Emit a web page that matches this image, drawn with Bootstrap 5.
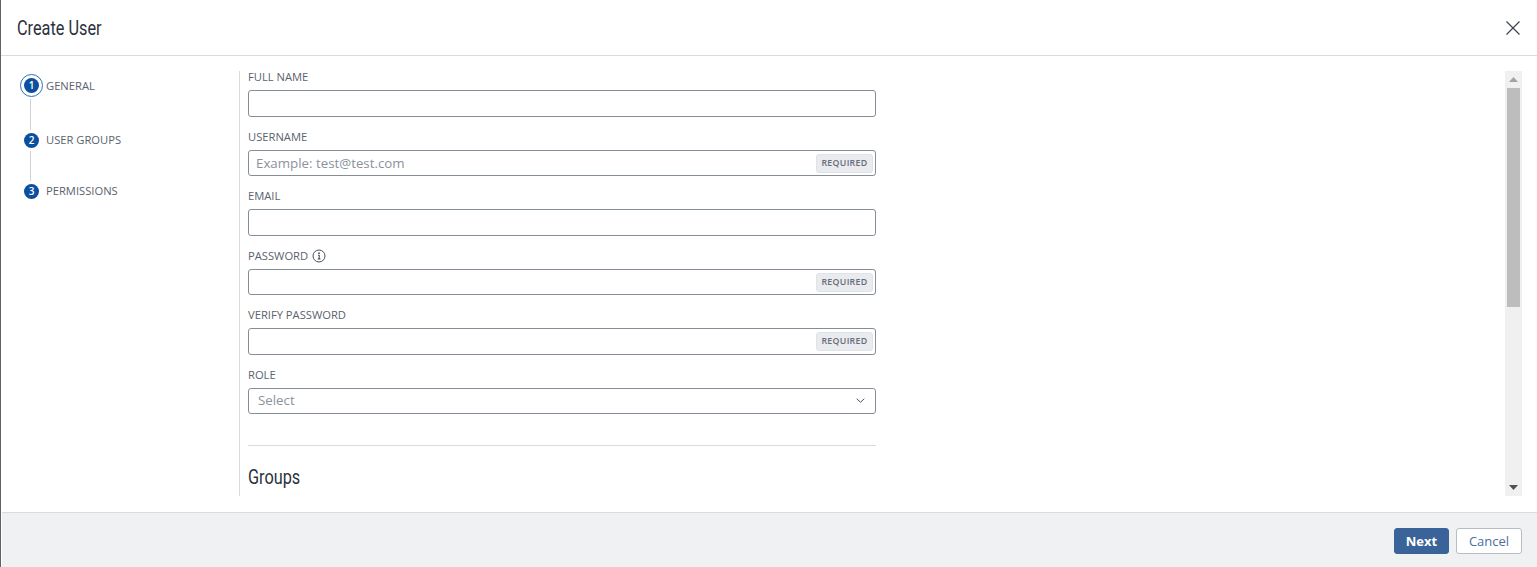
<!DOCTYPE html>
<html lang="en">
<head>
<meta charset="utf-8">
<title>Create User</title>
<link href="https://cdn.jsdelivr.net/npm/bootstrap@5.3.0/dist/css/bootstrap.min.css" rel="stylesheet">
<style>
html,body{height:567px;overflow:hidden;background:#fff}
body{font-family:"Open Sans","Noto Sans",sans-serif;color:#3c4250}
.shell{height:567px;border-left:1px solid #5f6368}
.top-bar{height:56px;padding:1px 16px 0;border-bottom:1px solid #d9dbde}
.top-title,.sect-title{font-family:"Roboto",sans-serif;font-size:21px;font-weight:400;color:#2b313c;margin:0;line-height:24px;display:inline-block;transform:scaleX(.775);transform-origin:left center}
.close-x{width:16px;height:16px;display:block}
.main-zone{height:456px;padding-top:15px;padding-bottom:16px}
.step-col{width:238px;flex:none;padding-left:19px;padding-top:3px}
.step-row{font-size:11.2px;color:#5b626e;line-height:16px}
.step-dot{width:15px;height:15px;border-radius:50%;background:#0b4f9e;color:#fff;font-size:10px;font-weight:600;line-height:15px;text-align:center;flex:none}
.step-ring{width:23px;height:23px;border:1.5px solid #2f6fb5;border-radius:50%;flex:none;background:#fff}
.step-slot{width:23px;flex:none;margin-right:3px}
.step-line{width:1px;background:#cfd2d6;margin-left:10px}
.step-line-a{height:31px;margin-top:1.5px;margin-bottom:2.5px}
.step-line-b{height:30px;margin-top:3px;margin-bottom:2px}
.form-pane{width:1266px;flex:none;border-left:1px solid #d9dbde;padding-left:8px}
.form-inner{width:628px;margin-top:-1px}
.fld-label{font-size:11.2px;color:#5b626e;line-height:14px;margin:0 0 6px;display:block}
.fld{height:26.5px;border:1px solid #858d99;border-radius:3px;padding:0 2px 0 7px;margin-bottom:13px;background:#fff}
.fld-input{border:0;outline:0;padding:2px 0 0;min-width:0;font-size:13.3px;color:#3c4250;background:transparent;font-family:inherit}
.fld-input::placeholder{color:#8b929c;opacity:1}
.req-tag{font-size:8.8px;font-weight:600;letter-spacing:.3px;color:#666c78;background:#e9ebef;border:1px solid #dfe2e6;border-radius:3px;height:19px;line-height:17px;padding:0 4.5px;margin-top:1px}
.pick-text{font-size:13.3px;color:#8b929c;margin-left:2px}
.rule-line{border:0;border-top:1px solid #d9dbde;opacity:1;margin:31px 0 19px}
.bar-track{width:17px;flex:none;background:#f0f0f0}
.bar-btn{height:17px}
.bar-thumb{height:219px;width:13px;background:#bdbdbd;margin:0 auto}
.bottom-bar{height:55px;background:#f0f1f3;border-top:1px solid #d9dbde;padding-right:15px;padding-top:2px;gap:7px;margin-left:1px}
.act-next{background:#3a6399;color:#fff;font-size:13px;font-weight:700;border:1px solid #3a6399;border-radius:3px;height:26px;width:55px;padding:0;line-height:24px}
.act-cancel{background:#fff;color:#4c6ea0;font-size:13px;border:1px solid #b8bdc5;border-radius:3px;height:26px;width:66px;padding:0;line-height:24px}
</style>
</head>
<body>
<div class="shell d-flex flex-column">
  <header class="top-bar d-flex align-items-center justify-content-between">
    <h1 class="top-title">Create User</h1>
    <svg class="close-x" viewBox="0 0 16 16" aria-label="Close"><path d="M1.5 1.5l13 13M14.5 1.5l-13 13" stroke="#3c4250" stroke-width="1.2" fill="none"/></svg>
  </header>
  <div class="main-zone d-flex">
    <nav class="step-col">
      <div class="step-row d-flex align-items-center">
        <span class="step-slot"><span class="step-ring d-flex align-items-center justify-content-center"><span class="step-dot">1</span></span></span>
        <span>GENERAL</span>
      </div>
      <div class="step-line step-line-a"></div>
      <div class="step-row d-flex align-items-center">
        <span class="step-slot d-flex justify-content-center"><span class="step-dot">2</span></span>
        <span>USER GROUPS</span>
      </div>
      <div class="step-line step-line-b"></div>
      <div class="step-row d-flex align-items-center">
        <span class="step-slot d-flex justify-content-center"><span class="step-dot">3</span></span>
        <span>PERMISSIONS</span>
      </div>
    </nav>
    <div class="form-pane">
      <form class="form-inner">
        <label class="fld-label">FULL NAME</label>
        <div class="fld d-flex align-items-center"><input class="fld-input flex-grow-1" type="text"></div>
        <label class="fld-label">USERNAME</label>
        <div class="fld d-flex align-items-center"><input class="fld-input flex-grow-1" type="text" placeholder="Example: test@test.com"><span class="req-tag">REQUIRED</span></div>
        <label class="fld-label">EMAIL</label>
        <div class="fld d-flex align-items-center"><input class="fld-input flex-grow-1" type="text"></div>
        <label class="fld-label d-flex align-items-center gap-1">PASSWORD
          <svg width="14" height="14" viewBox="0 0 14 14"><circle cx="7" cy="7" r="6" fill="none" stroke="#4a505c" stroke-width="1"/><path d="M6 6.2h1.2v3.6M5.8 9.9h2.6" fill="none" stroke="#4a505c" stroke-width="1.1"/><circle cx="7" cy="4.2" r=".9" fill="#4a505c"/></svg>
        </label>
        <div class="fld d-flex align-items-center"><input class="fld-input flex-grow-1" type="password"><span class="req-tag">REQUIRED</span></div>
        <label class="fld-label">VERIFY PASSWORD</label>
        <div class="fld d-flex align-items-center"><input class="fld-input flex-grow-1" type="password"><span class="req-tag">REQUIRED</span></div>
        <label class="fld-label">ROLE</label>
        <div class="fld d-flex align-items-center justify-content-between mb-0">
          <span class="pick-text">Select</span>
          <svg width="9" height="5" viewBox="0 0 9 5" class="me-2"><path d="M.7.7l3.8 3.6L8.3.7" fill="none" stroke="#4a505c" stroke-width="1"/></svg>
        </div>
        <hr class="rule-line">
        <h2 class="sect-title">Groups</h2>
      </form>
    </div>
    <div class="bar-track d-flex flex-column">
      <div class="bar-btn d-flex align-items-center justify-content-center"><svg width="9" height="5" viewBox="0 0 9 5"><path d="M4.5 0L9 5H0z" fill="#a3a3a3"/></svg></div>
      <div class="bar-thumb"></div>
      <div class="flex-grow-1"></div>
      <div class="bar-btn d-flex align-items-center justify-content-center"><svg width="9" height="5" viewBox="0 0 9 5"><path d="M0 0h9L4.5 5z" fill="#505050"/></svg></div>
    </div>
  </div>
  <footer class="bottom-bar d-flex align-items-center justify-content-end">
    <button type="button" class="btn act-next">Next</button>
    <button type="button" class="btn act-cancel">Cancel</button>
  </footer>
</div>
<script src="https://cdn.jsdelivr.net/npm/bootstrap@5.3.0/dist/js/bootstrap.bundle.min.js"></script>
</body>
</html>
